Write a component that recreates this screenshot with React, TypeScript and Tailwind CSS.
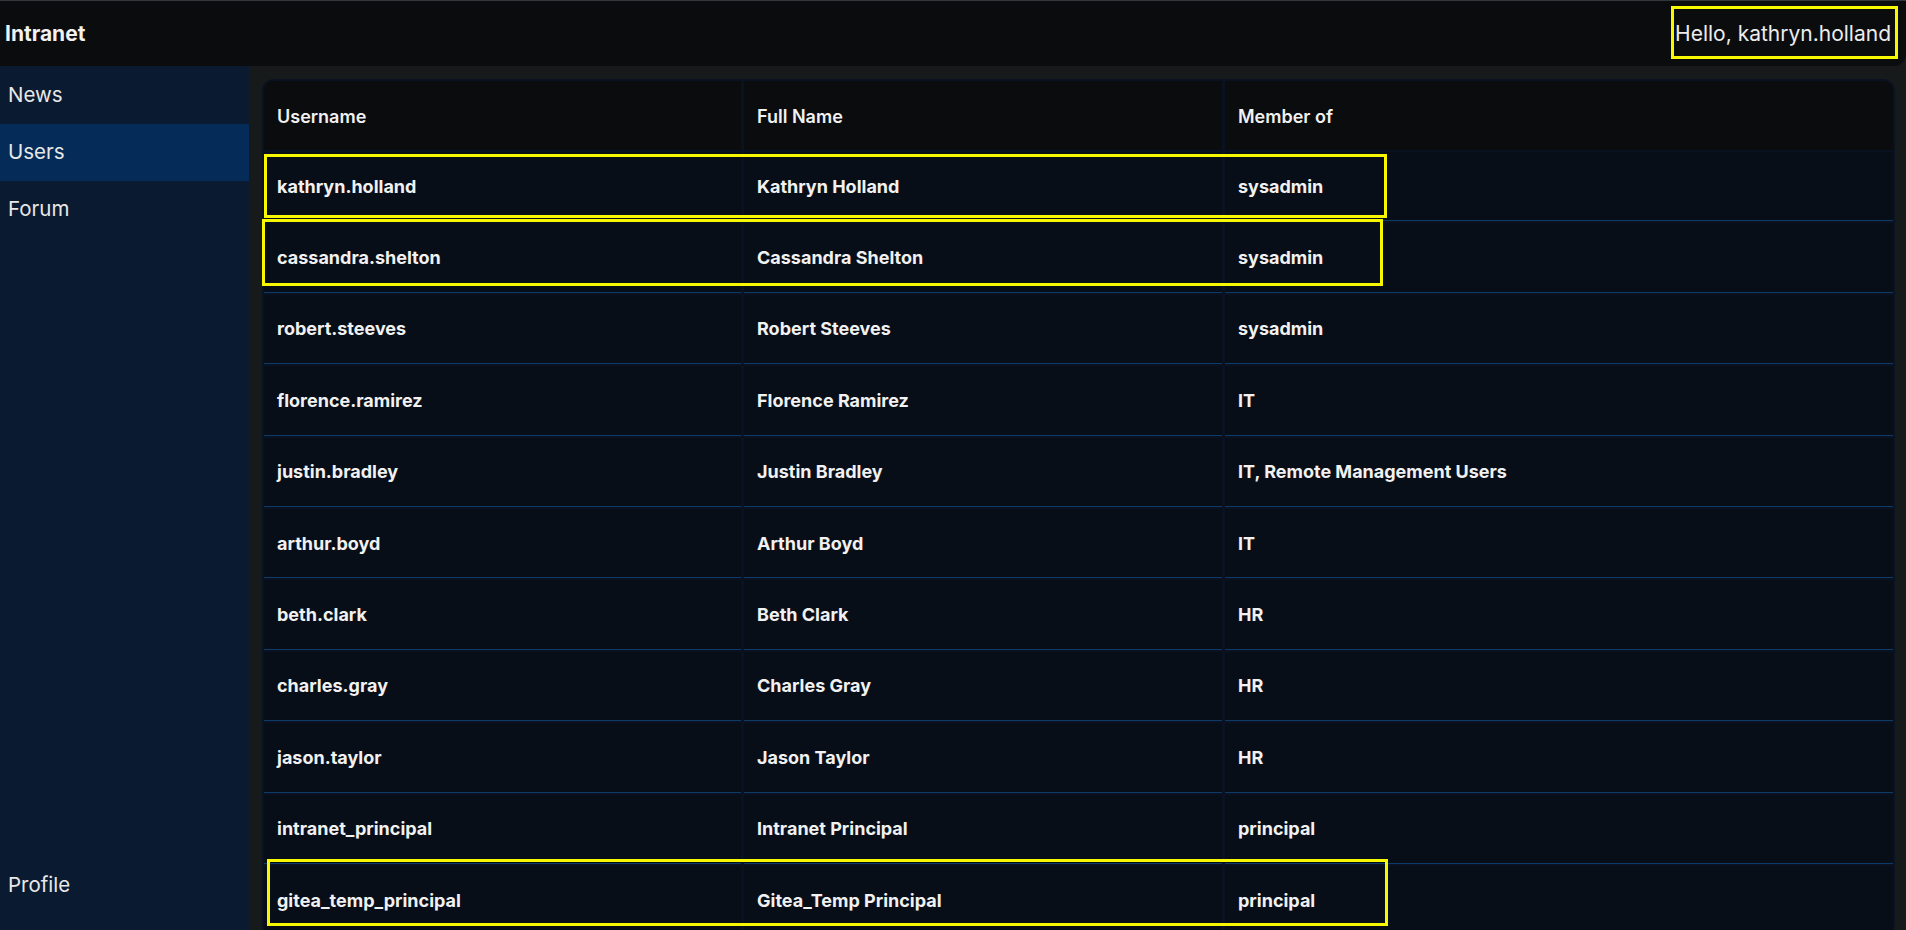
import React from "react";

const rows: [string, string, string][] = [
  ["kathryn.holland", "Kathryn Holland", "sysadmin"],
  ["cassandra.shelton", "Cassandra Shelton", "sysadmin"],
  ["robert.steeves", "Robert Steeves", "sysadmin"],
  ["florence.ramirez", "Florence Ramirez", "IT"],
  ["justin.bradley", "Justin Bradley", "IT, Remote Management Users"],
  ["arthur.boyd", "Arthur Boyd", "IT"],
  ["beth.clark", "Beth Clark", "HR"],
  ["charles.gray", "Charles Gray", "HR"],
  ["jason.taylor", "Jason Taylor", "HR"],
  ["intranet_principal", "Intranet Principal", "principal"],
  ["gitea_temp_principal", "Gitea_Temp Principal", "principal"],
];

function Box({ l, t, w, h }: { l: number; t: number; w: number; h: number }) {
  return (
    <div
      className="absolute border-[3px] border-[#f7f700] pointer-events-none"
      style={{ left: l, top: t, width: w, height: h }}
    />
  );
}

export default function App() {
  return (
    <div
      className="relative w-[1906px] h-[930px] overflow-hidden bg-[#161a1b] text-[#f1f1f1] flex flex-col"
      style={{ fontFamily: "Inter, 'Noto Sans', sans-serif" }}
    >
      <header className="h-[66px] shrink-0 bg-[#0b0c0e] border-t border-[#34373b] rounded-br-xl flex items-center justify-between pl-[5px] pr-[15px]">
        <div className="text-[21px] font-bold leading-none">Intranet</div>
        <div className="text-[21px] font-normal leading-none text-[#ececec]">Hello, kathryn.holland</div>
      </header>
      <div className="flex flex-1 min-h-0">
        <aside className="w-[249px] shrink-0 bg-[#0a1a31] flex flex-col justify-between text-[20.5px] text-[#e8e8e8]">
          <nav className="flex flex-col">
            <div className="h-[58px] flex items-center px-[8px]">News</div>
            <div className="h-[57px] flex items-center px-[8px] bg-[#052c58]">Users</div>
            <div className="h-[57px] flex items-center px-[8px]">Forum</div>
          </nav>
          <div className="h-[57px] flex items-center px-[8px] mb-[16px]">Profile</div>
        </aside>
        <main className="flex-1 pl-[13px] pt-[13px] pr-[11px]">
          <div className="bg-[#0a1120] rounded-xl p-[2px]">
            <div className="grid grid-cols-[477px_478px_1fr] gap-x-[3px] gap-y-[2px] text-[18px] font-bold">
              {["Username", "Full Name", "Member of"].map((h, i) => (
                <div
                  key={h}
                  className={
                    "h-[69px] bg-[#0b0c0e] flex items-center pl-[13px] pt-[2px] font-semibold " +
                    (i === 0 ? "rounded-tl-[10px]" : i === 2 ? "rounded-tr-[10px]" : "")
                  }
                >
                  {h}
                </div>
              ))}
              {rows.map((r) =>
                r.map((c, i) => (
                  <div
                    key={r[0] + i}
                    className="h-[69.4px] bg-[#080e18] border-b border-[#0d3a66] flex items-center pl-[13px]"
                  >
                    {c}
                  </div>
                ))
              )}
            </div>
          </div>
        </main>
      </div>
      <Box l={1671} t={6} w={227} h={53} />
      <Box l={264} t={154} w={1123} h={64} />
      <Box l={262} t={219} w={1121} h={67} />
      <Box l={267} t={859} w={1121} h={67} />
    </div>
  );
}
